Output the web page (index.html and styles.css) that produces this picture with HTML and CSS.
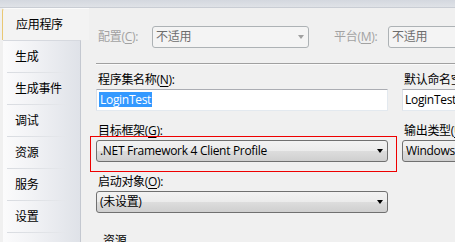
FILE: index.html
```html
<!DOCTYPE html>
<html lang="zh-CN">
<head>
    <meta charset="UTF-8">
    <title>LoginTest - 应用程序</title>
    <link rel="stylesheet" href="styles.css">
</head>
<body>
    <div class="topbar"></div>
    <div class="designer">
        <nav class="sidebar">
            <div class="tab-active">应用程序</div>
            <ul class="tab-list">
                <li>生成</li>
                <li>生成事件</li>
                <li>调试</li>
                <li>资源</li>
                <li>服务</li>
                <li>设置</li>
            </ul>
        </nav>

        <main class="page">
            <div class="config-row">
                <span class="lbl lbl-disabled">配置(<u>C</u>):</span>
                <div class="combo combo-disabled combo-config">不适用<i class="arrow"></i></div>
                <span class="lbl lbl-disabled lbl-platform">平台(<u>M</u>):</span>
                <div class="combo combo-disabled combo-platform">不适用<i class="arrow"></i></div>
            </div>

            <div class="sep"></div>

            <div class="fields">
                <div class="field">
                    <label>程序集名称(<u>N</u>):</label>
                    <div class="textbox"><span class="selection">LoginTest</span></div>
                </div>
                <div class="field">
                    <label>默认命名空间(<u>L</u>):</label>
                    <div class="textbox">LoginTest</div>
                </div>

                <div class="field">
                    <label>目标框架(<u>G</u>):</label>
                    <div class="combo marked">.NET Framework 4 Client Profile<i class="arrow"></i></div>
                </div>
                <div class="field">
                    <label>输出类型(<u>U</u>):</label>
                    <div class="combo">Windows 应用程序<i class="arrow"></i></div>
                </div>

                <div class="field">
                    <label>启动对象(<u>O</u>):</label>
                    <div class="combo">(未设置)<i class="arrow"></i></div>
                </div>
            </div>

            <div class="group-title">资源</div>
        </main>
    </div>
</body>
</html>
```

FILE: styles.css
```css
html, body {
    overflow: hidden;
}

body {
    margin: 0;
    height: 242px;
    background: #f0f0f0;
    font-family: "Open Sans", "Noto Sans CJK SC", sans-serif;
    font-size: 12px;
    line-height: 16px;
    letter-spacing: -0.3px;
    color: #000;
}

u {
    text-decoration: underline;
    text-underline-offset: 2px;
}

.topbar {
    height: 7px;
    background: linear-gradient(#d4d8df, #dfe2e7);
    border-bottom: 1px solid #c9cdd4;
}

.designer {
    display: flex;
    height: 234px;
    overflow: hidden;
}

/* left tab column */
.sidebar {
    width: 81px;
    flex-shrink: 0;
    padding-left: 2px;
    box-sizing: border-box;
    display: flex;
    flex-direction: column;
}

.tab-active {
    height: 31px;
    margin-right: -8px;
    padding-left: 13px;
    line-height: 31px;
    background: #f3f3f3;
    border-left: 1px solid #e9c874;
    border-top: 1px solid #fbfbfb;
    border-radius: 3px 0 0 0;
}

.tab-list {
    flex: 1;
    list-style: none;
    margin: 0 0 0 1px;
    padding: 0;
    background: linear-gradient(to right, #fbfbfc, #f1f2f5 40%, #dfe2e8);
    border-right: 1px solid #c4c8d0;
    border-top: 1px solid #d6d9df;
}

.tab-list li {
    position: relative;
    height: 32px;
    padding-left: 12px;
    line-height: 31px;
}

.tab-list li::after {
    content: "";
    position: absolute;
    left: 4px;
    right: 10px;
    bottom: 0;
    height: 1px;
    background: linear-gradient(to right, #d9dce1, #e4e6ea 80%, transparent);
}

/* main page */
.page {
    flex: 1;
    padding-left: 15px;
    min-width: 0;
    overflow: hidden;
}

.lbl {
    width: 56px;
    padding-left: 2px;
    box-sizing: border-box;
    flex-shrink: 0;
    white-space: nowrap;
}

.lbl-disabled {
    color: #a2a2a2;
}

.config-row {
    display: flex;
    align-items: center;
    margin-top: 18px;
    height: 22px;
}

.lbl-platform {
    margin-left: 23px;
}

.combo {
    position: relative;
    height: 22px;
    box-sizing: border-box;
    padding-left: 3px;
    line-height: 20px;
    white-space: nowrap;
    border: 1px solid #707070;
    border-radius: 3px;
    background: linear-gradient(#f2f2f2, #ebebeb 50%, #dddddd 50%, #cfcfcf);
}

.combo .arrow {
    position: absolute;
    right: 4px;
    top: 8px;
    width: 0;
    height: 0;
    border-left: 3.5px solid transparent;
    border-right: 3.5px solid transparent;
    border-top: 4px solid #000;
}

.combo-disabled {
    color: #6d6d6d;
    background: #f4f4f4;
    border-color: #adb2b5;
}

.combo-disabled .arrow {
    border-top-color: #a0a0a0;
}

.combo-config {
    width: 157px;
    flex-shrink: 0;
}

.combo-platform {
    width: 120px;
    flex-shrink: 0;
}

.sep {
    height: 1px;
    margin-top: 15px;
    background: #a0a0a0;
    border-bottom: 1px solid #fafafa;
}

.fields {
    display: grid;
    grid-template-columns: 292px 200px;
    column-gap: 14px;
    row-gap: 12px;
    margin-top: 7px;
}

.field label {
    display: block;
    padding-left: 2px;
    margin-bottom: 1px;
    white-space: nowrap;
}

.textbox {
    height: 22px;
    box-sizing: border-box;
    padding: 2px 0 0 2px;
    line-height: 16px;
    white-space: nowrap;
    background: #fff;
    border: 1px solid #e3e9ef;
    border-top-color: #abadb3;
    border-left-color: #dbdfe6;
    border-radius: 1px;
}

.selection {
    display: inline-block;
    padding: 0 1px;
    height: 15px;
    line-height: 15px;
    background: #3399ff;
    color: #fff;
}

.marked::after {
    content: "";
    position: absolute;
    left: -7px;
    top: -5px;
    width: 305px;
    height: 34px;
    border: 1px solid #ee0000;
}

.group-title {
    margin-top: 20px;
    padding-left: 7px;
}
```
